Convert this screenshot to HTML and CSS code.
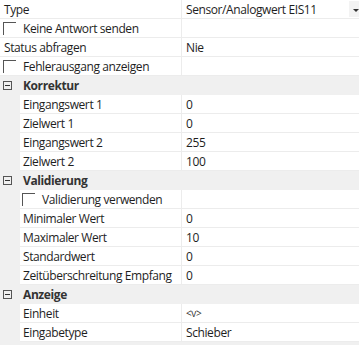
FILE: index.html
```html
<!DOCTYPE html>
<html lang="de">

<head>
    <meta charset="UTF-8">
    <title>Eigenschaften</title>
    <link rel="stylesheet" href="styles.css">
</head>

<body>
    <div class="grid">
        <div class="row">
            <div class="label">Type</div>
            <div class="value combo">Sensor/Analogwert EIS11<span class="drop"></span></div>
        </div>
        <div class="row">
            <div class="label"><span class="check"></span>Keine Antwort senden</div>
            <div class="value"></div>
        </div>
        <div class="row">
            <div class="label">Status abfragen</div>
            <div class="value">Nie</div>
        </div>
        <div class="row">
            <div class="label"><span class="check"></span>Fehlerausgang anzeigen</div>
            <div class="value"></div>
        </div>

        <div class="cat"><span class="toggle"></span>Korrektur</div>
        <div class="row child">
            <div class="label">Eingangswert 1</div>
            <div class="value">0</div>
        </div>
        <div class="row child">
            <div class="label">Zielwert 1</div>
            <div class="value">0</div>
        </div>
        <div class="row child">
            <div class="label">Eingangswert 2</div>
            <div class="value">255</div>
        </div>
        <div class="row child">
            <div class="label">Zielwert 2</div>
            <div class="value">100</div>
        </div>

        <div class="cat"><span class="toggle"></span>Validierung</div>
        <div class="row child">
            <div class="label"><span class="check"></span>Validierung verwenden</div>
            <div class="value"></div>
        </div>
        <div class="row child">
            <div class="label">Minimaler Wert</div>
            <div class="value">0</div>
        </div>
        <div class="row child">
            <div class="label">Maximaler Wert</div>
            <div class="value">10</div>
        </div>
        <div class="row child">
            <div class="label">Standardwert</div>
            <div class="value">0</div>
        </div>
        <div class="row child">
            <div class="label">Zeitüberschreitung Empfang</div>
            <div class="value">0</div>
        </div>

        <div class="cat"><span class="toggle"></span>Anzeige</div>
        <div class="row child">
            <div class="label">Einheit</div>
            <div class="value small">&lt;v&gt;</div>
        </div>
        <div class="row child">
            <div class="label">Eingabetype</div>
            <div class="value">Schieber</div>
        </div>
    </div>
</body>

</html>
```

FILE: styles.css
```css
/* Reset */

* {
    box-sizing: border-box;
    margin: 0;
    padding: 0;
}

body {
    font-family: "Open Sans", "Noto Sans", Arial, sans-serif;
    font-size: 12px;
    letter-spacing: -0.4px;
    color: #1e1e1e;
    background: #f0f0f0;
    width: 359px;
    height: 345px;
    overflow: hidden;
}

/* Property grid */

.grid {
    display: flex;
    flex-direction: column;
}

.row {
    display: grid;
    grid-template-columns: 182px 1fr;
    height: 19px;
    background: #fff;
    border-bottom: 1px solid #ececec;
}

.row.child {
    margin-left: 20px;
    grid-template-columns: 162px 1fr;
}

.label,
.value {
    display: flex;
    align-items: center;
    white-space: nowrap;
    overflow: hidden;
}

.label {
    padding-left: 4px;
    border-right: 1px solid #ececec;
}

.row.child .label {
    padding-left: 3px;
}

.value {
    padding-left: 4px;
    position: relative;
}

.value.small {
    font-size: 10px;
    color: #333;
}

/* Dropdown button in the first row */

.drop {
    position: absolute;
    right: 0;
    top: 1px;
    width: 10px;
    height: 16px;
    background: #f3f3f3;
}

.drop::after {
    content: "";
    position: absolute;
    left: 4px;
    top: 8px;
    border-left: 3px solid transparent;
    border-right: 3px solid transparent;
    border-top: 3px solid #333;
}

/* Checkbox */

.check {
    display: inline-block;
    width: 13px;
    height: 13px;
    margin-left: -1px;
    margin-right: 7px;
    border-left: 1px solid #555;
    border-top: 1px solid #555;
}

/* Categories */

.cat {
    display: flex;
    align-items: center;
    height: 19px;
    padding-left: 3px;
    font-weight: bold;
    color: #333;
    background: #f0f0f0;
    border-bottom: 1px solid #f0f0f0;
}

.toggle {
    position: relative;
    display: inline-block;
    width: 9px;
    height: 9px;
    margin-right: 11px;
    border: 1px solid #555;
}

.toggle::after {
    content: "";
    position: absolute;
    left: 1px;
    top: 3px;
    width: 5px;
    height: 1px;
    background: #333;
}
```
